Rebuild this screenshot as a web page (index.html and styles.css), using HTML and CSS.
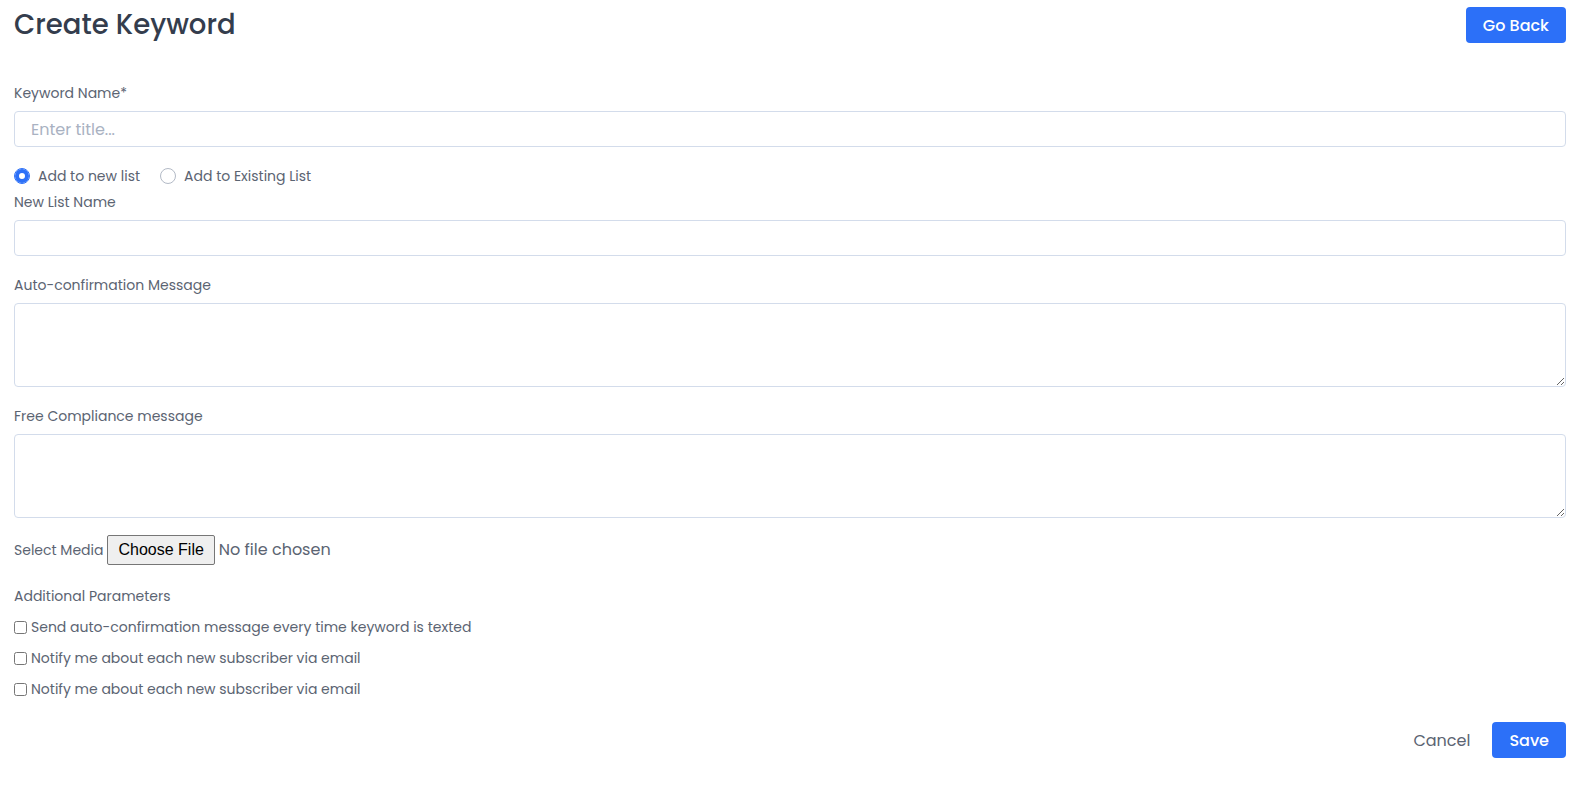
FILE: index.html
```html
<!DOCTYPE html>
<html lang="en">
<head>
    <meta charset="UTF-8">
    <meta name="viewport" content="width=device-width, initial-scale=1.0">
    <title>Create Keyword</title>
    <link rel="stylesheet" href="styles.css">
</head>
<body>
    <div class="page">
        <div class="page-header">
            <h1 class="page-title">Create Keyword</h1>
            <button class="btn btn-primary">Go Back</button>
        </div>

        <form class="keyword-form">
            <div class="form-group">
                <label class="form-label">Keyword Name*</label>
                <input type="text" class="form-control" placeholder="Enter title...">
            </div>

            <div class="radio-row">
                <label class="radio-item"><input type="radio" name="listType" checked> Add to new list</label>
                <label class="radio-item"><input type="radio" name="listType"> Add to Existing List</label>
            </div>

            <div class="form-group">
                <label class="form-label">New List Name</label>
                <input type="text" class="form-control">
            </div>

            <div class="form-group">
                <label class="form-label">Auto-confirmation Message</label>
                <textarea class="form-control textarea"></textarea>
            </div>

            <div class="form-group">
                <label class="form-label">Free Compliance message</label>
                <textarea class="form-control textarea"></textarea>
            </div>

            <div class="media-row">
                <label class="form-label inline">Select Media</label>
                <input type="file" class="file-input">
            </div>

            <div class="params">
                <div class="form-label">Additional Parameters</div>
                <label class="check-item"><input type="checkbox"> Send auto-confirmation message every time keyword is texted</label>
                <label class="check-item"><input type="checkbox"> Notify me about each new subscriber via email</label>
                <label class="check-item"><input type="checkbox"> Notify me about each new subscriber via email</label>
            </div>

            <div class="form-actions">
                <button type="button" class="btn btn-link">Cancel</button>
                <button type="button" class="btn btn-primary">Save</button>
            </div>
        </form>
    </div>
</body>
</html>
```

FILE: styles.css
```css
body {
    margin: 0;
    padding: 0;
    font-family: "Poppins", "Open Sans", sans-serif;
    color: #5b6472;
    background: #fff;
}

.page {
    padding: 7px 16px 0 14px;
}

.page-header {
    display: flex;
    justify-content: space-between;
    align-items: center;
    height: 36px;
}

.page-title {
    margin: 0;
    font-size: 27.5px;
    font-weight: 500;
    color: #343d4d;
}

.btn {
    font-family: inherit;
    font-size: 16px;
    font-weight: 500;
    border: none;
    border-radius: 4px;
    cursor: pointer;
}

.btn-primary {
    background-color: #2c70f8;
    color: #fff;
    height: 36px;
    padding: 0 17px;
}

.btn-link {
    background: none;
    color: #5b6472;
    padding: 0 22px 0 0;
    font-weight: 400;
}

.keyword-form {
    margin-top: 40px;
}

.form-group {
    margin-bottom: 19px;
}

.form-label {
    display: block;
    font-size: 14px;
    line-height: 20px;
    font-weight: 400;
    color: #5b6472;
    margin-bottom: 8px;
}

.form-label.inline {
    display: inline;
    margin: 0;
}

.form-control {
    display: block;
    box-sizing: border-box;
    width: 100%;
    height: 36px;
    border: 1px solid #d3dceb;
    border-radius: 4px;
    padding: 0 16px;
    font-family: inherit;
    font-size: 16px;
    color: #343d4d;
}

.form-control::placeholder {
    color: #a9b2c2;
}

.textarea {
    height: 84px;
    padding: 8px 16px;
}

.radio-row {
    display: flex;
    gap: 20px;
    margin-top: 1px;
    height: 20px;
    align-items: center;
    margin-bottom: 6px;
}

.radio-item {
    display: flex;
    align-items: center;
    gap: 6px;
    font-size: 14px;
    font-weight: 400;
}

.radio-item input {
    appearance: none;
    box-sizing: border-box;
    width: 16px;
    height: 16px;
    margin: 0 2px 0 0;
    border: 1px solid #b3bac6;
    border-radius: 50%;
    background: #fff;
}

.radio-item input:checked {
    border-color: #2c70f8;
    box-shadow: inset 0 0 0 4px #2c70f8;
}

.media-row {
    display: flex;
    align-items: center;
    gap: 4px;
    margin-top: -2px;
    height: 30px;
}

.file-input {
    font-family: inherit;
    font-size: 16px;
    color: #5b6472;
}

.file-input::file-selector-button {
    font-family: "Liberation Sans", Arial, sans-serif;
    font-size: 16px;
    height: 30px;
    padding: 0 10px;
    margin-right: 4px;
    background: #efefef;
    border: 1px solid #767676;
    border-radius: 2px;
    color: #000;
}

.params {
    margin-top: 21px;
}

.params .form-label {
    margin-bottom: 6px;
}

.check-item {
    display: flex;
    align-items: center;
    height: 31px;
    font-size: 14px;
    font-weight: 400;
}

.check-item input {
    width: 13px;
    height: 13px;
    margin: 0 4px 0 0;
}

.form-actions {
    display: flex;
    justify-content: flex-end;
    align-items: center;
    margin-top: 17px;
}
```
